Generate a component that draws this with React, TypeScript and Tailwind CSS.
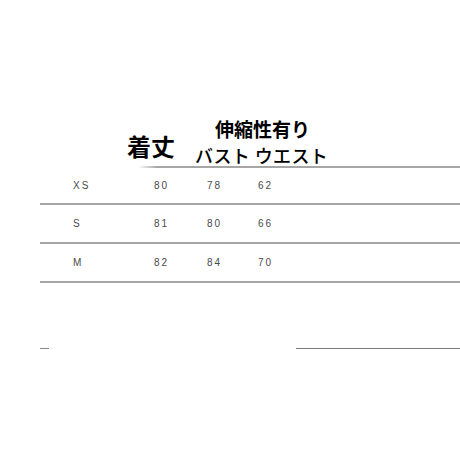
const rows = [
  { size: 'XS', length: '80', bust: '78', waist: '62' },
  { size: 'S', length: '81', bust: '80', waist: '66' },
  { size: 'M', length: '82', bust: '84', waist: '70' },
];

const jp = { fontFamily: '"Noto Sans CJK JP", "Noto Sans", sans-serif' };

export default function App() {
  return (
    <div className="w-[460px] h-[460px] bg-white overflow-hidden" style={jp}>
      <div className="flex pt-[119px] text-black">
        <div className="ml-[127px] mt-[15px] text-[24px] leading-[24px] font-bold">着丈</div>
        <div className="ml-[20px] flex flex-col">
          <div className="ml-[20px] text-[19px] leading-[19px] font-bold">伸縮性有り</div>
          <div className="mt-[8px] text-[18px] leading-[18px] font-medium tracking-[0.4px] whitespace-pre">バスト ウエスト</div>
        </div>
      </div>

      <div className="mt-[2px] ml-[138px] h-[2px] bg-gradient-to-r from-white to-[#a6a6a6] to-[6%]" />

      <div className="font-['Liberation_Sans',sans-serif] text-[10px] text-[#4a4a4a] tracking-[2px]">
        {rows.map((r, i) => (
          <div key={r.size}>
            <div className={`flex items-center pl-[73px] ${i === 0 ? 'h-[35px]' : 'h-[37px]'}`}>
              <span className="w-[81px]">{r.size}</span>
              <span className="w-[53px]">{r.length}</span>
              <span className="w-[51px]">{r.bust}</span>
              <span>{r.waist}</span>
            </div>
            <div className="ml-[40px] h-[2px] bg-[#a6a6a6]" />
          </div>
        ))}
      </div>

      <div className="flex mt-[65px]">
        <div className="ml-[40px] w-[9px] h-px bg-[#8a8a8a]" />
        <div className="ml-auto w-[164px] h-px bg-[#7a7a7a]" />
      </div>
    </div>
  );
}
